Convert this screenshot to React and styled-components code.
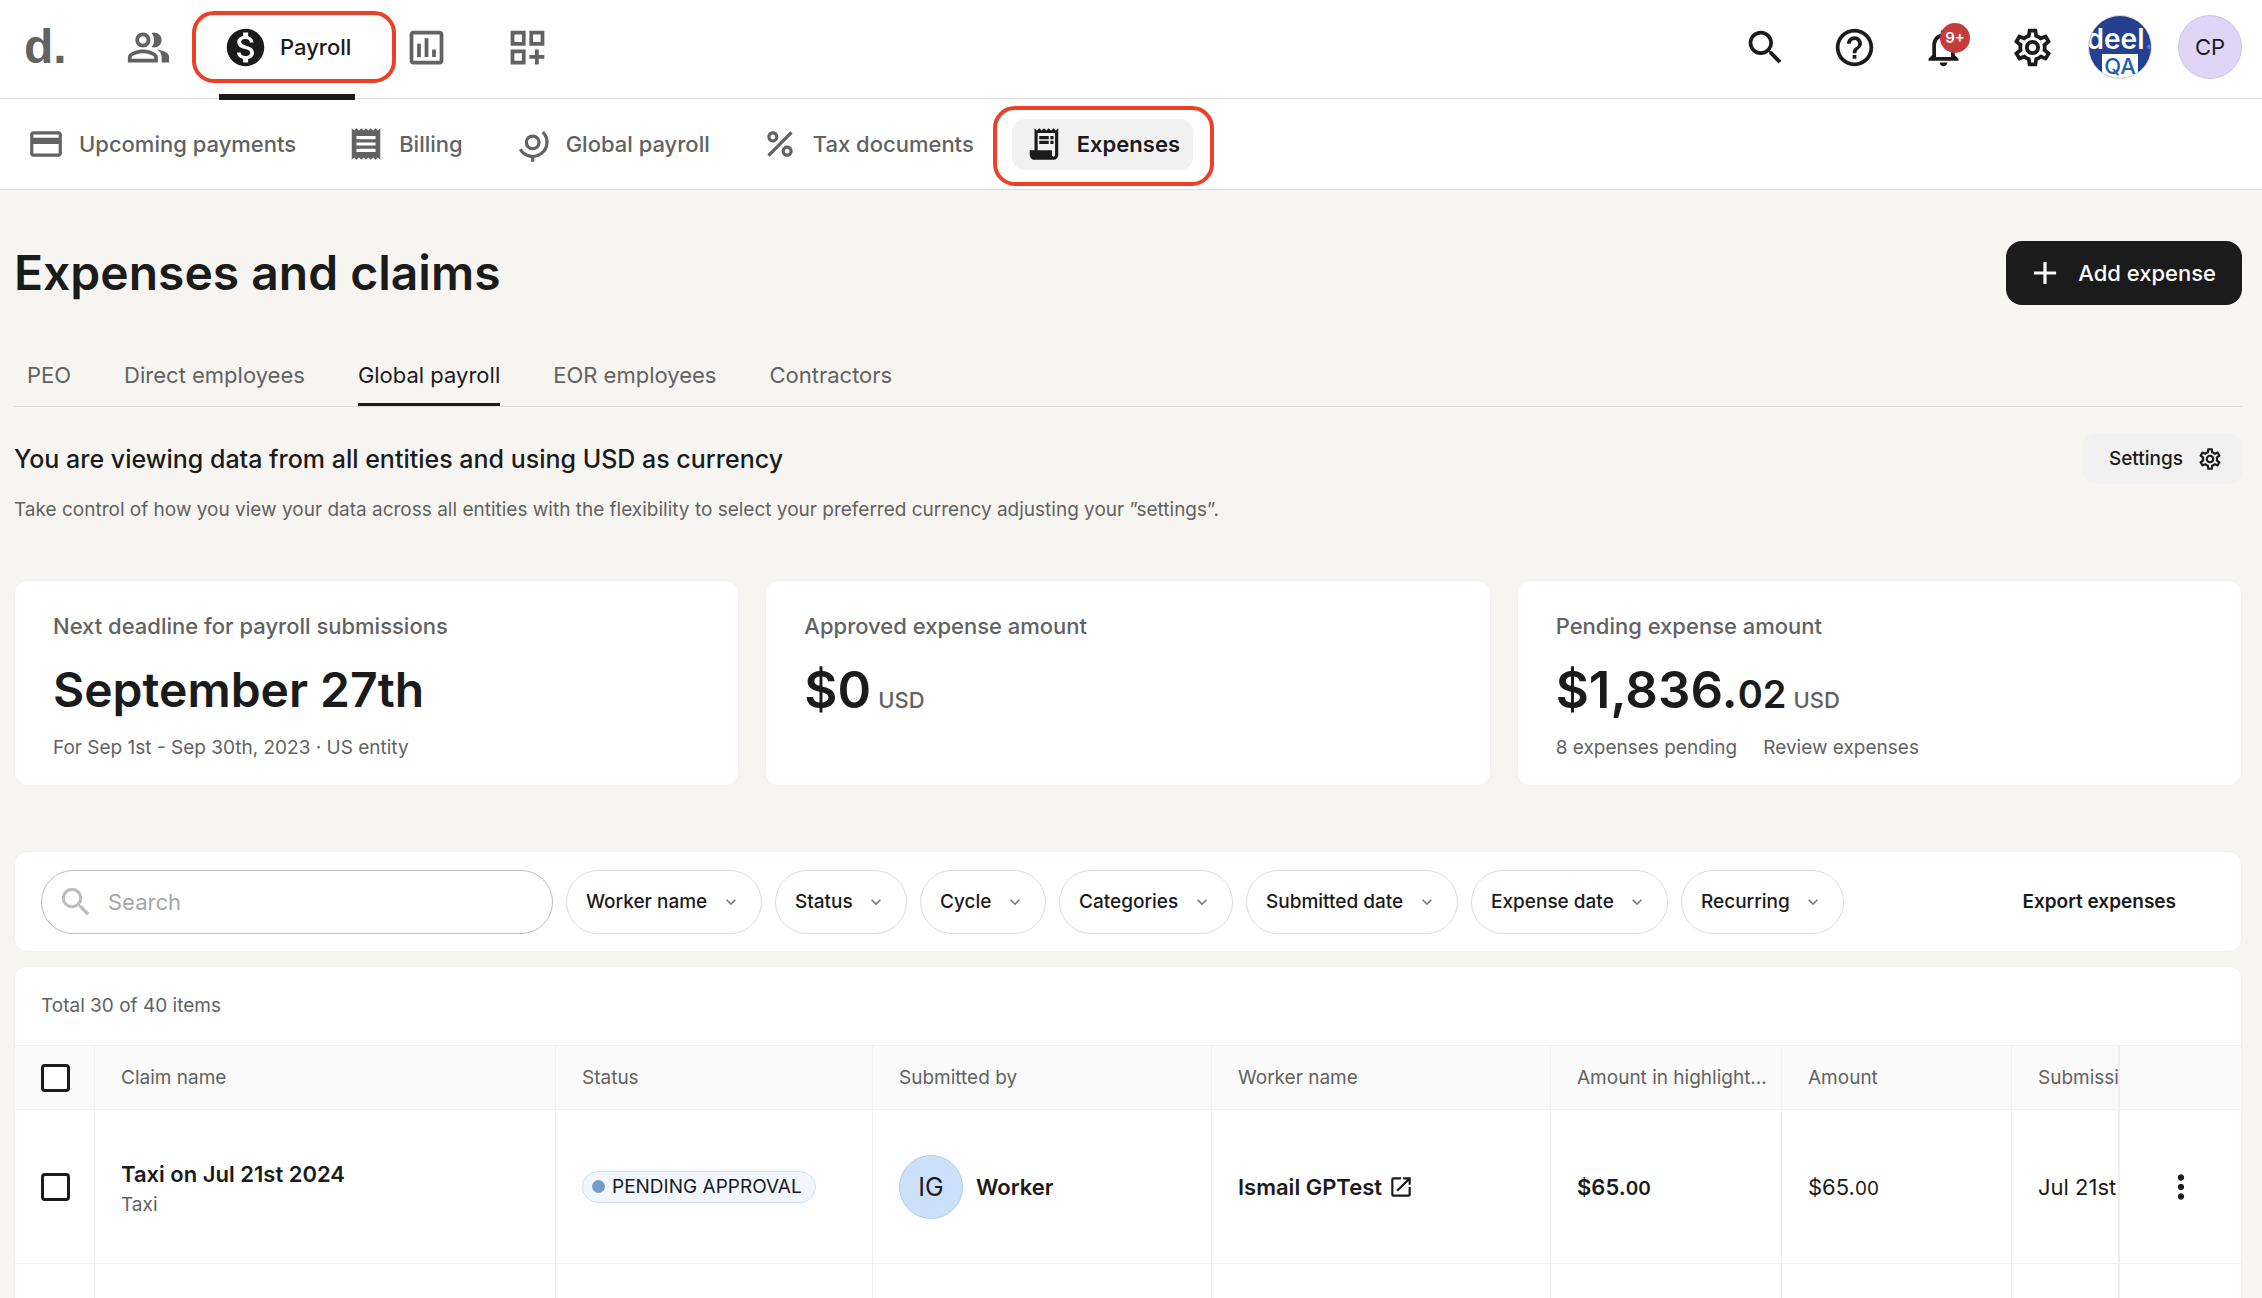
import { useState } from "react";
import styled, { createGlobalStyle } from "styled-components";
import {
  MdAdd,
  MdCreditCard,
  MdHelpOutline,
  MdKeyboardArrowDown,
  MdMonetizationOn,
  MdMoreVert,
  MdOpenInNew,
  MdOutlineDashboardCustomize,
  MdOutlineInsertChart,
  MdOutlineNotifications,
  MdOutlinePeopleAlt,
  MdOutlineSettings,
  MdPercent,
  MdReceipt,
  MdReceiptLong,
  MdSearch,
} from "react-icons/md";

const GlobalStyle = createGlobalStyle`
  * {
    box-sizing: border-box;
  }

  body {
    margin: 0;
    background-color: #f6f5f1;
    color: #1b1b1b;
    font-family: Inter, "Liberation Sans", sans-serif;
    font-size: 20px;
  }

  button, input, select {
    font: inherit;
    color: inherit;
  }

  button {
    border: 0;
    background: none;
    padding: 0;
    cursor: pointer;
  }

  a {
    color: inherit;
    text-decoration: none;
  }

  svg {
    display: block;
    flex-shrink: 0;
  }
`;

const Page = styled.div`
  display: flex;
  flex-direction: column;
  height: 100vh;
  overflow: hidden;
`;

const TopBar = styled.header`
  display: flex;
  align-items: stretch;
  height: 99px;
  padding: 0 20px 4px 24px;
  background-color: white;
  border-bottom: 1px solid #dcdcdc;
`;

const Logo = styled.a`
  align-self: center;
  width: 94px;
  color: #626262;
  font-family: "Liberation Sans", sans-serif;
  font-size: 48px;
  font-weight: 700;
  line-height: 64px;
`;

const MainNav = styled.nav`
  display: flex;
  gap: 41px;
  flex: 1;
`;

const MainLink = styled.a`
  position: relative;
  display: flex;
  align-items: center;
  justify-content: center;
  gap: 12px;
  min-width: 60px;
  height: 94px;
  padding: 0 4px;
  color: ${(props) => (props.$active ? "#1b1b1b" : "#626262")};
  font-size: 22px;
  font-weight: 500;
`;

const ActiveBar = styled.span`
  position: absolute;
  left: 0;
  right: 0;
  top: 94px;
  height: 6px;
  background-color: #1b1b1b;
`;

const Highlight = styled.span`
  position: absolute;
  inset: ${(props) => props.$inset};
  border: 4px solid #ec4027;
  border-radius: 22px;
  pointer-events: none;
`;

const Actions = styled.div`
  display: flex;
  align-items: center;
  gap: 44px;
  margin-right: 33px;
`;

const IconButton = styled.button`
  position: relative;
  display: flex;
  align-items: center;
  justify-content: center;
`;

const Badge = styled.span`
  position: absolute;
  top: -2px;
  left: 19px;
  width: 30px;
  height: 30px;
  border-radius: 50%;
  background-color: #c43c3c;
  color: white;
  font-size: 15px;
  font-weight: 600;
  line-height: 29px;
  text-align: center;
`;

const Avatars = styled.div`
  display: flex;
  align-items: center;
  gap: 26px;
`;

const Avatar = styled.span`
  display: flex;
  align-items: center;
  justify-content: center;
  flex-shrink: 0;
  width: 64px;
  height: 64px;
  border-radius: 50%;
  border: 1px solid ${(props) => props.$border};
  background-color: ${(props) => props.$color};
  font-size: ${(props) => props.$size}px;
  font-weight: 400;
`;

const CompanyAvatar = styled.span`
  display: flex;
  flex-direction: column;
  align-items: center;
  width: 64px;
  height: 64px;
  padding-top: 8px;
  border-radius: 50%;
  border: 1px solid #dcdcdc;
  background-color: #24408e;
  overflow: hidden;
  color: white;
  font-size: 28px;
  font-weight: 600;
  line-height: 30px;
`;

const Dot = styled.span`
  color: #3b74f2;
`;

const Qa = styled.span`
  width: 36px;
  height: 26px;
  background-color: white;
  color: #1f5fae;
  font-size: 22px;
  font-weight: 500;
  line-height: 24px;
  text-align: center;
`;

const SubNav = styled.nav`
  display: flex;
  align-items: center;
  gap: 25px;
  height: 91px;
  padding: 0 14px;
  background-color: white;
  border-bottom: 1px solid #dcdcdc;
`;

const SubLink = styled.a`
  position: relative;
  display: flex;
  align-items: center;
  gap: 14px;
  height: 51px;
  padding: 0 13px;
  border-radius: 13px;
  background-color: ${(props) => (props.$active ? "#f1f1f1" : "transparent")};
  color: ${(props) => (props.$active ? "#1b1b1b" : "#626262")};
  font-size: 22px;
  font-weight: ${(props) => (props.$active ? 600 : 500)};
`;

const Content = styled.main`
  display: flex;
  flex-direction: column;
  flex: 1;
  min-height: 0;
  padding: 51px 20px 0 14px;
`;

const TitleRow = styled.div`
  display: flex;
  align-items: center;
  justify-content: space-between;
`;

const Title = styled.h1`
  margin: 0;
  font-size: 48px;
  font-weight: 600;
  line-height: 64px;
`;

const AddButton = styled.button`
  display: flex;
  align-items: center;
  gap: 14px;
  height: 64px;
  padding: 0 26px 0 20px;
  border-radius: 16px;
  background-color: #1b1b1b;
  color: white;
  font-size: 22px;
  font-weight: 500;
`;

const Tabs = styled.div`
  display: flex;
  gap: 53px;
  height: 64px;
  margin-top: 38px;
  padding-left: 13px;
  border-bottom: 1px solid #dcdcdc;
`;

const Tab = styled.button`
  height: 63px;
  padding-top: 3px;
  border-bottom: 3px solid
    ${(props) => (props.$active ? "#1b1b1b" : "transparent")};
  color: ${(props) => (props.$active ? "#1b1b1b" : "#626262")};
  font-size: 22px;
`;

const EntityRow = styled.div`
  display: flex;
  align-items: center;
  justify-content: space-between;
  margin-top: 26px;
`;

const EntityTitle = styled.h2`
  margin: 0;
  font-size: 25px;
  font-weight: 500;
  line-height: 36px;
`;

const SettingsButton = styled.button`
  display: flex;
  align-items: center;
  gap: 14px;
  height: 51px;
  padding: 0 19px 0 26px;
  border-radius: 13px;
  background-color: #f1f1f1;
  font-size: 19px;
  font-weight: 500;
`;

const Hint = styled.p`
  margin: 13px 0 0;
  color: #626262;
  font-size: 19px;
  line-height: 26px;
`;

const Cards = styled.div`
  display: grid;
  grid-template-columns: repeat(3, 1fr);
  gap: 26px;
  margin-top: 57px;
`;

const Card = styled.section`
  height: 206px;
  padding: 29px 38px;
  border: 1px solid #f1f1f1;
  border-radius: 13px;
  background-color: white;
`;

const CardLabel = styled.p`
  margin: 0;
  color: #626262;
  font-size: 22px;
  font-weight: 500;
  line-height: 32px;
`;

const CardValue = styled.p`
  margin: 16px 0 0;
  font-size: ${(props) => (props.$date ? 48 : 51)}px;
  font-weight: 600;
  line-height: 64px;
`;

const Cents = styled.span`
  font-size: 38px;
  line-height: 38px;
`;

const Currency = styled.span`
  margin-left: 7px;
  color: #626262;
  font-size: 22px;
  font-weight: 500;
  line-height: 22px;
`;

const CardNote = styled.p`
  display: flex;
  gap: 26px;
  margin: 13px 0 0;
  color: #626262;
  font-size: 19px;
  line-height: 26px;
`;

const FilterBar = styled.div`
  display: flex;
  align-items: center;
  gap: 13px;
  flex-shrink: 0;
  height: 101px;
  margin-top: 65px;
  padding: 0 65px 0 26px;
  border: 1px solid #f1f1f1;
  border-radius: 13px;
  background-color: white;
`;

const SearchBox = styled.label`
  display: flex;
  align-items: center;
  gap: 11px;
  width: 512px;
  height: 64px;
  padding: 0 15px;
  border: 1px solid #bdbdbd;
  border-radius: 32px;
  color: #bdbdbd;
`;

const SearchInput = styled.input`
  flex: 1;
  min-width: 0;
  border: 0;
  outline: 0;
  background: none;
  color: #1b1b1b;
  font-size: 22px;

  &::placeholder {
    color: #a6a6a6;
  }
`;

const FilterBox = styled.span`
  position: relative;
  display: flex;
  align-items: center;

  svg {
    position: absolute;
    right: 21px;
    color: #7a7a7a;
    pointer-events: none;
  }
`;

const FilterSelect = styled.select`
  appearance: none;
  height: 64px;
  padding: 0 53px 0 19px;
  border: 1px solid #dcdcdc;
  border-radius: 32px;
  background: none;
  font-size: 19px;
  font-weight: 500;
`;

const ExportButton = styled.button`
  margin-left: auto;
  font-size: 19px;
  font-weight: 600;
`;

const TableCard = styled.section`
  flex: 1;
  min-height: 0;
  margin-top: 14px;
  border: 1px solid #f1f1f1;
  border-bottom: 0;
  border-radius: 13px 13px 0 0;
  background-color: white;
  overflow: hidden;
`;

const Total = styled.p`
  margin: 0;
  padding: 26px;
  color: #626262;
  font-size: 19px;
  line-height: 26px;
`;

const TableScroll = styled.div`
  overflow-x: auto;
  scrollbar-width: none;
`;

const Table = styled.table`
  width: 2420px;
  table-layout: fixed;
  border-collapse: separate;
  border-spacing: 0;
  border-top: 1px solid #f1f1f1;
`;

const Col = styled.col`
  width: ${(props) => props.$width}px;
`;

const HeadCell = styled.th`
  height: 64px;
  padding: 0 12px 0 26px;
  border-right: 1px solid #f1f1f1;
  border-bottom: 1px solid #f1f1f1;
  background-color: #fafafa;
  color: #626262;
  font-size: 19px;
  font-weight: 400;
  text-align: left;
  white-space: nowrap;
  overflow: hidden;
  text-overflow: ellipsis;

  &:last-child {
    position: sticky;
    right: 0;
    border-left: 2px solid #eeeeee;
    border-right: 0;
  }
`;

const Cell = styled.td`
  height: 154px;
  padding: 0 12px 0 26px;
  border-right: 1px solid #f1f1f1;
  border-bottom: 1px solid #f1f1f1;
  background-color: white;
  font-size: 22px;
  font-weight: ${(props) => (props.$strong ? 600 : 400)};
  white-space: nowrap;
  overflow: hidden;

  &:last-child {
    position: sticky;
    right: 0;
    padding: 0;
    border-left: 2px solid #eeeeee;
    border-right: 0;
  }
`;

const Checkbox = styled.input`
  appearance: none;
  display: block;
  width: 29px;
  height: 28px;
  margin: 0;
  border: 3px solid #1b1b1b;
  border-radius: 4px;
  background-color: white;

  &:checked {
    background-color: #1b1b1b;
  }
`;

const ClaimName = styled.div`
  padding-top: 4px;
  font-weight: 600;
  line-height: 32px;
`;

const ClaimType = styled.div`
  color: #626262;
  font-size: 19px;
  line-height: 30px;
`;

const Status = styled.span`
  display: inline-flex;
  align-items: center;
  gap: 7px;
  height: 32px;
  padding: 0 13px 0 9px;
  border: 1px solid #c9dffb;
  border-radius: 16px;
  background-color: #f2f7ff;
  font-size: 19px;
  vertical-align: middle;

  &::before {
    content: "";
    width: 13px;
    height: 13px;
    border-radius: 50%;
    background-color: #739ccb;
  }
`;

const Person = styled.span`
  display: flex;
  align-items: center;
  gap: 13px;
`;

const WorkerLink = styled.a`
  display: flex;
  align-items: center;
  gap: 6px;
`;

const SmallCents = styled.span`
  font-size: 19px;
`;

const RowMenu = styled.button`
  display: block;
  margin: 0 auto;
`;

const GlobeIcon = () => (
  <svg
    width="38"
    height="38"
    viewBox="0 0 24 24"
    fill="none"
    stroke="currentColor"
    strokeWidth="2"
    aria-hidden="true"
  >
    <circle cx="11.8" cy="11" r="4" />
    <path d="M18.2 4.5a9 9 0 1 1-14.2 10.8M11.8 19.8v3.4" />
  </svg>
);

const subLinks = [
  { label: "Upcoming payments", icon: <MdCreditCard size={38} /> },
  { label: "Billing", icon: <MdReceipt size={38} /> },
  { label: "Global payroll", icon: <GlobeIcon /> },
  { label: "Tax documents", icon: <MdPercent size={38} /> },
  { label: "Expenses", icon: <MdReceiptLong size={38} />, active: true },
];

const tabs = [
  "PEO",
  "Direct employees",
  "Global payroll",
  "EOR employees",
  "Contractors",
];

const filters = [
  "Worker name",
  "Status",
  "Cycle",
  "Categories",
  "Submitted date",
  "Expense date",
  "Recurring",
];

const columns = [
  { label: "Claim name", width: 461 },
  { label: "Status", width: 317 },
  { label: "Submitted by", width: 339 },
  { label: "Worker name", width: 339 },
  { label: "Amount in highlighted currency", width: 231 },
  { label: "Amount", width: 230 },
  { label: "Submission date", width: 300 },
];

function App() {
  const [tab, setTab] = useState("Global payroll");
  const [search, setSearch] = useState("");

  return (
    <>
      <GlobalStyle />
      <Page>
        <TopBar>
          <Logo href="#home">d.</Logo>
          <MainNav aria-label="Main">
            <MainLink href="#people" aria-label="People">
              <MdOutlinePeopleAlt size={45} />
            </MainLink>
            <MainLink href="#payroll" $active>
              <MdMonetizationOn size={45} />
              Payroll
              <ActiveBar />
              <Highlight $inset="11px -41px 11px -27px" />
            </MainLink>
            <MainLink href="#analytics" aria-label="Analytics">
              <MdOutlineInsertChart size={45} />
            </MainLink>
            <MainLink href="#apps" aria-label="Apps">
              <MdOutlineDashboardCustomize size={45} />
            </MainLink>
          </MainNav>
          <Actions>
            <IconButton aria-label="Search">
              <MdSearch size={45} />
            </IconButton>
            <IconButton aria-label="Help">
              <MdHelpOutline size={45} />
            </IconButton>
            <IconButton aria-label="Notifications">
              <MdOutlineNotifications size={45} />
              <Badge>9+</Badge>
            </IconButton>
            <IconButton aria-label="Settings">
              <MdOutlineSettings size={45} />
            </IconButton>
          </Actions>
          <Avatars>
            <CompanyAvatar>
              <span>
                deel<Dot>.</Dot>
              </span>
              <Qa>QA</Qa>
            </CompanyAvatar>
            <Avatar $color="#dfd6f7" $border="#cbc4e0" $size={22}>
              CP
            </Avatar>
          </Avatars>
        </TopBar>

        <SubNav aria-label="Payroll">
          {subLinks.map((link) => (
            <SubLink key={link.label} href="#payroll" $active={link.active}>
              {link.icon}
              {link.label}
              {link.active ? <Highlight $inset="-13px -21px -16px -19px" /> : ""}
            </SubLink>
          ))}
        </SubNav>

        <Content>
          <TitleRow>
            <Title>Expenses and claims</Title>
            <AddButton>
              <MdAdd size={38} />
              Add expense
            </AddButton>
          </TitleRow>

          <Tabs role="tablist">
            {tabs.map((name) => (
              <Tab
                key={name}
                role="tab"
                aria-selected={name === tab}
                $active={name === tab}
                onClick={() => setTab(name)}
              >
                {name}
              </Tab>
            ))}
          </Tabs>

          <EntityRow>
            <EntityTitle>
              You are viewing data from all entities and using USD as currency
            </EntityTitle>
            <SettingsButton>
              Settings
              <MdOutlineSettings size={26} />
            </SettingsButton>
          </EntityRow>
          <Hint>
            Take control of how you view your data across all entities with the
            flexibility to select your preferred currency adjusting your
            ”settings”.
          </Hint>

          <Cards>
            <Card>
              <CardLabel>Next deadline for payroll submissions</CardLabel>
              <CardValue $date>September 27th</CardValue>
              <CardNote>For Sep 1st - Sep 30th, 2023 · US entity</CardNote>
            </Card>
            <Card>
              <CardLabel>Approved expense amount</CardLabel>
              <CardValue>
                $0<Currency>USD</Currency>
              </CardValue>
            </Card>
            <Card>
              <CardLabel>Pending expense amount</CardLabel>
              <CardValue>
                $1,836.<Cents>02</Cents>
                <Currency>USD</Currency>
              </CardValue>
              <CardNote>
                <span>8 expenses pending</span>
                <a href="#review">Review expenses</a>
              </CardNote>
            </Card>
          </Cards>

          <FilterBar>
            <SearchBox>
              <MdSearch size={38} />
              <SearchInput
                type="text"
                placeholder="Search"
                aria-label="Search"
                value={search}
                onChange={(e) => setSearch(e.target.value)}
              />
            </SearchBox>
            {filters.map((name) => (
              <FilterBox key={name}>
                <FilterSelect aria-label={name}>
                  <option>{name}</option>
                </FilterSelect>
                <MdKeyboardArrowDown size={20} />
              </FilterBox>
            ))}
            <ExportButton>Export expenses</ExportButton>
          </FilterBar>

          <TableCard>
            <Total>Total 30 of 40 items</Total>
            <TableScroll>
              <Table>
                <colgroup>
                  <Col $width={80} />
                  {columns.map((column) => (
                    <Col key={column.label} $width={column.width} />
                  ))}
                  <Col $width={123} />
                </colgroup>
                <thead>
                  <tr>
                    <HeadCell>
                      <Checkbox type="checkbox" aria-label="Select all" />
                    </HeadCell>
                    {columns.map((column) => (
                      <HeadCell key={column.label}>{column.label}</HeadCell>
                    ))}
                    <HeadCell aria-label="Actions" />
                  </tr>
                </thead>
                <tbody>
                  <tr>
                    <Cell>
                      <Checkbox type="checkbox" aria-label="Select claim" />
                    </Cell>
                    <Cell>
                      <ClaimName>Taxi on Jul 21st 2024</ClaimName>
                      <ClaimType>Taxi</ClaimType>
                    </Cell>
                    <Cell>
                      <Status>PENDING APPROVAL</Status>
                    </Cell>
                    <Cell $strong>
                      <Person>
                        <Avatar $color="#cbe1fb" $border="#b4cbe8" $size={25}>
                          IG
                        </Avatar>
                        Worker
                      </Person>
                    </Cell>
                    <Cell $strong>
                      <WorkerLink href="#worker">
                        Ismail GPTest
                        <MdOpenInNew size={26} />
                      </WorkerLink>
                    </Cell>
                    <Cell $strong>
                      $65.<SmallCents>00</SmallCents>
                    </Cell>
                    <Cell>
                      $65.<SmallCents>00</SmallCents>
                    </Cell>
                    <Cell>Jul 21st 2024</Cell>
                    <Cell>
                      <RowMenu aria-label="More actions">
                        <MdMoreVert size={38} />
                      </RowMenu>
                    </Cell>
                  </tr>
                  <tr>
                    <Cell />
                    {columns.map((column) => (
                      <Cell key={column.label} />
                    ))}
                    <Cell />
                  </tr>
                </tbody>
              </Table>
            </TableScroll>
          </TableCard>
        </Content>
      </Page>
    </>
  );
}

export default App;
